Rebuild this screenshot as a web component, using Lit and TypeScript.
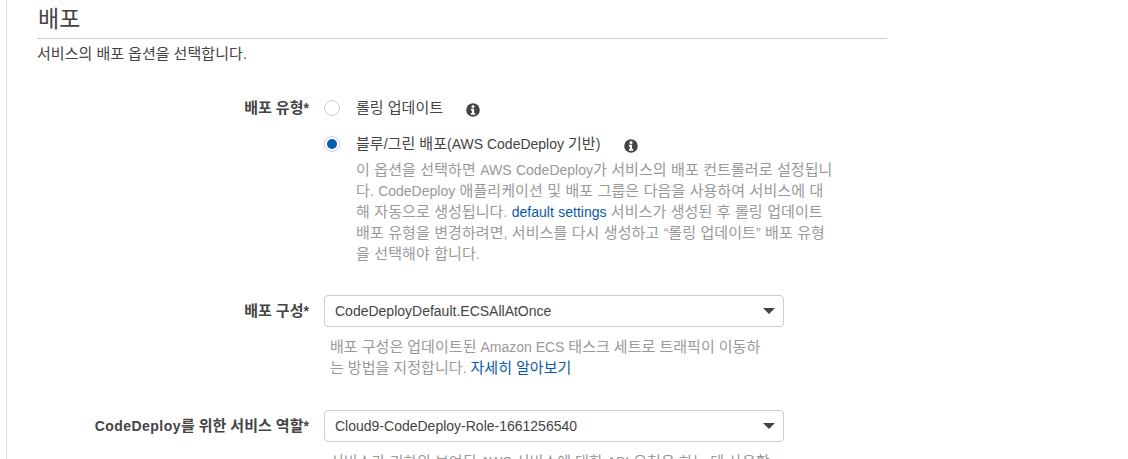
import { LitElement, html, css } from "lit";
import { customElement } from "lit/decorators.js";

const info = html`<svg class="info" viewBox="0 0 14 14" aria-hidden="true">
  <circle cx="7" cy="7" r="6.8" fill="#444"></circle>
  <circle cx="7" cy="3.5" r="1.5" fill="#fff"></circle>
  <path d="M4.9 5.8h3.2v4.3h1.1v1.6H4.9v-1.6h1V7.4h-1z" fill="#fff"></path>
</svg>`;

/* Hangul runs are set a little larger than the Latin text around them. */
const ko = (text: string) =>
  text
    .split(/([\uAC00-\uD7A3]+)/)
    .map((part, i) => (i % 2 ? html`<span class="ko">${part}</span>` : part));

@customElement("app-root")
export class AppRoot extends LitElement {
  static styles = css`
    :host {
      display: block;
      width: 1128px;
      height: 459px;
      overflow: hidden;
      background: #fff;
      font-family: "Liberation Sans", "Noto Sans CJK KR", sans-serif;
      font-size: 14px;
      color: #444;
    }
    .ko {
      font-size: 15px;
      line-height: 1;
      letter-spacing: 0.07px;
    }
    .page {
      margin-left: 6px;
      border-left: 1px solid #ddd;
      height: 459px;
      padding-left: 30px;
      width: 850px;
    }
    h2 {
      margin: 0;
      font-size: 23px;
      font-weight: 400;
      line-height: 38px;
      height: 38px;
      border-bottom: 1px solid #ccc;
      padding-left: 1px;
    }
    h2 .ko {
      font-size: 23px;
    }
    .lead {
      margin: 5px 0 0;
      line-height: 20px;
    }
    .row {
      display: grid;
      grid-template-columns: 272px 1fr;
      column-gap: 15px;
    }
    .label {
      text-align: right;
      font-weight: 700;
      line-height: 20px;
      white-space: nowrap;
    }
    .wide {
      letter-spacing: 0.45px;
    }
    .type {
      margin-top: 28px;
    }
    .type .label {
      padding-top: 6px;
    }
    .radio {
      display: flex;
      align-items: center;
      height: 32px;
    }
    .radio + .radio {
      margin-top: 4px;
    }
    .dot {
      width: 14px;
      height: 14px;
      border: 1px solid #ccc;
      border-radius: 50%;
      flex: none;
      margin-right: 16px;
      background: #fff;
      position: relative;
    }
    .dot.on::after {
      content: "";
      position: absolute;
      inset: 2px;
      border-radius: 50%;
      background: #0b5cb5;
    }
    .info {
      width: 14px;
      height: 14px;
      flex: none;
      margin-top: 3px;
    }
    .radio .info {
      margin-left: 23px;
    }
    .radio + .radio .info {
      margin-left: 24px;
    }
    .hint {
      color: #999;
      line-height: 21px;
      margin: 0;
    }
    .desc {
      width: 478px;
      margin-left: 32px;
      word-spacing: 0.5px;
    }
    a {
      color: #0a59a8;
      text-decoration: none;
    }
    .config {
      margin-top: 30px;
    }
    .role {
      margin-top: 31px;
    }
    .config .label,
    .role .label {
      padding-top: 6px;
    }
    .select {
      box-sizing: border-box;
      width: 460px;
      height: 32px;
      border: 1px solid #ccc;
      border-radius: 4px;
      display: flex;
      align-items: center;
      justify-content: space-between;
      padding: 0 8px 0 10px;
      background: #fff;
    }
    .caret {
      width: 0;
      height: 0;
      border-left: 6px solid transparent;
      border-right: 6px solid transparent;
      border-top: 6px solid #444;
      margin-bottom: 1px;
    }
    .sub {
      width: 440px;
      margin: 10px 0 0 6px;
    }
  `;

  render() {
    return html`<div class="page">
      <h2>${ko("배포")}</h2>
      <p class="lead">${ko("서비스의 배포 옵션을 선택합니다.")}</p>
      <div class="row type">
        <div class="label">${ko("배포 유형*")}</div>
        <div>
          <div class="radio"><span class="dot"></span><span>${ko("롤링 업데이트")}</span>${info}</div>
          <div class="radio"><span class="dot on"></span><span>${ko("블루/그린 배포(AWS CodeDeploy 기반)")}</span>${info}</div>
          <p class="hint desc">${ko("이 옵션을 선택하면 AWS CodeDeploy가 서비스의 배포 컨트롤러로 설정됩니다. CodeDeploy 애플리케이션 및 배포 그룹은 다음을 사용하여 서비스에 대해 자동으로 생성됩니다. ")}<a>default settings</a>${ko(" 서비스가 생성된 후 롤링 업데이트 배포 유형을 변경하려면, 서비스를 다시 생성하고 “롤링 업데이트” 배포 유형을 선택해야 합니다.")}</p>
        </div>
      </div>
      <div class="row config">
        <div class="label">${ko("배포 구성*")}</div>
        <div>
          <div class="select"><span>CodeDeployDefault.ECSAllAtOnce</span><span class="caret"></span></div>
          <p class="hint sub">${ko("배포 구성은 업데이트된 Amazon ECS 태스크 세트로 트래픽이 이동하는 방법을 지정합니다. ")}<a>${ko("자세히 알아보기")}</a></p>
        </div>
      </div>
      <div class="row role">
        <div class="label"><span class="wide">CodeDeploy</span>${ko("를 위한 서비스 역할*")}</div>
        <div>
          <div class="select"><span>Cloud9-CodeDeploy-Role-1661256540</span><span class="caret"></span></div>
          <p class="hint sub">${ko("서비스가 귀하의 보여된 AWS 서비스에 대한 API 요청을 하는 데 사용할")}</p>
        </div>
      </div>
    </div>`;
  }
}
